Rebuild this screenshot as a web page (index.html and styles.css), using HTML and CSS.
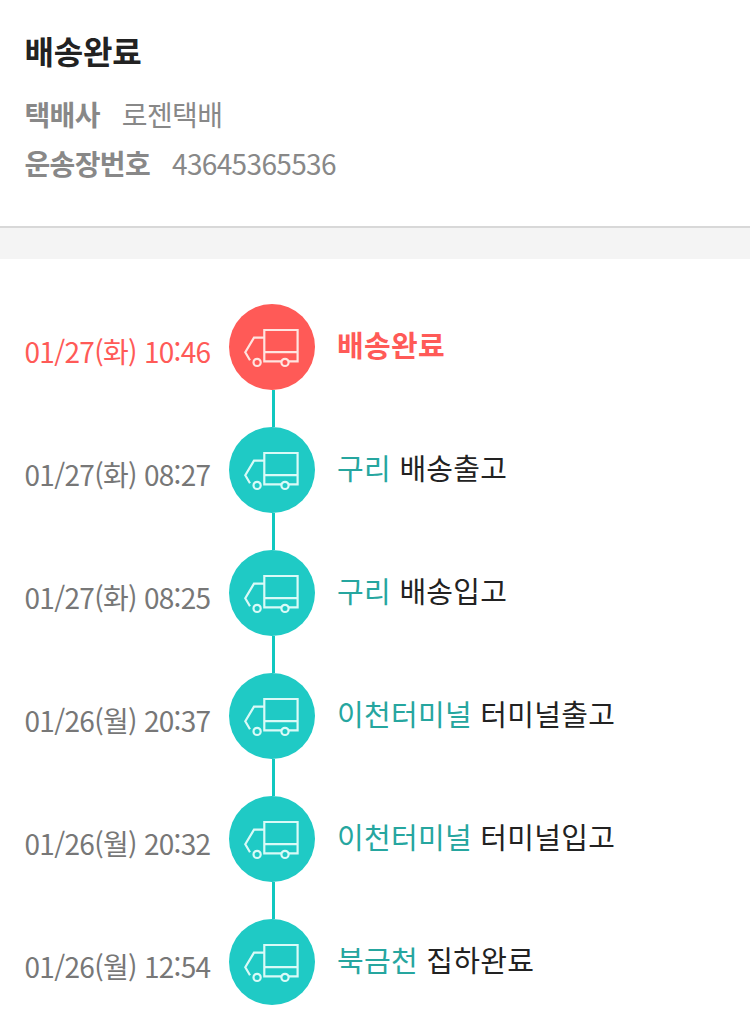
FILE: index.html
```
<!DOCTYPE html>
<html lang="ko">
<head>
<meta charset="utf-8">
<meta name="viewport" content="width=device-width, initial-scale=1.0">
<title>배송조회</title>
<link rel="stylesheet" href="styles.css">
</head>
<body>
<svg width="0" height="0" class="defs">
	<symbol id="truck" viewBox="0 0 86 86">
		<path d="M35.3 26H68.6V57.3H35.3ZM35.3 48.2H68.6M35.3 33.7H25L16.3 48.3L21 56.3" />
		<circle class="wheel" cx="28.1" cy="58.4" r="3.6" />
		<circle class="wheel" cx="56" cy="58.4" r="3.6" />
	</symbol>
</svg>

<div class="summary">
	<h1>배송완료</h1>
	<dl><dt>택배사</dt><dd>로젠택배</dd></dl>
	<dl><dt>운송장번호</dt><dd>43645365536</dd></dl>
</div>

<ul class="steps">
	<li class="done">
		<span class="time">01/27(화) 10:46</span>
		<span class="mark"><svg class="ico"><use href="#truck" /></svg></span>
		<span class="state">배송완료</span>
	</li>
	<li>
		<span class="time">01/27(화) 08:27</span>
		<span class="mark"><svg class="ico"><use href="#truck" /></svg></span>
		<span class="state"><em>구리</em> 배송출고</span>
	</li>
	<li>
		<span class="time">01/27(화) 08:25</span>
		<span class="mark"><svg class="ico"><use href="#truck" /></svg></span>
		<span class="state"><em>구리</em> 배송입고</span>
	</li>
	<li>
		<span class="time">01/26(월) 20:37</span>
		<span class="mark"><svg class="ico"><use href="#truck" /></svg></span>
		<span class="state"><em>이천터미널</em> 터미널출고</span>
	</li>
	<li>
		<span class="time">01/26(월) 20:32</span>
		<span class="mark"><svg class="ico"><use href="#truck" /></svg></span>
		<span class="state"><em>이천터미널</em> 터미널입고</span>
	</li>
	<li>
		<span class="time">01/26(월) 12:54</span>
		<span class="mark"><svg class="ico"><use href="#truck" /></svg></span>
		<span class="state"><em>북금천</em> 집하완료</span>
	</li>
</ul>
</body>
</html>
```
FILE: styles.css
```
* {box-sizing:border-box;margin:0;padding:0;}
body {background:#fff;color:#222;font-family:"Noto Sans CJK KR","Noto Sans KR",sans-serif;font-size:28px;overflow:hidden;}
.defs {display:block;}

.summary {height:228px;padding:26px 24.5px 0;border-bottom:2px solid #d8d8d8;}
.summary h1 {font-size:32px;line-height:48px;font-weight:700;letter-spacing:-0.2px;margin-bottom:16px;}
.summary dl {display:flex;height:49px;line-height:49px;color:#888;letter-spacing:-0.65px;}
.summary dt {font-weight:700;margin-right:22px;}

.steps {list-style:none;border-top:31px solid #f4f4f4;padding-top:45px;}
.steps li {--c:#1fcac5;display:flex;height:123.1px;}
.time {width:229px;flex:none;padding:26px 0 0 24.5px;line-height:42px;color:#777;letter-spacing:-0.7px;white-space:nowrap;}
.mark {width:86px;flex:none;display:flex;flex-direction:column;align-items:center;}
.ico {display:block;width:86px;height:86px;flex:none;border-radius:50%;background:var(--c);fill:none;stroke:#d9faf7;stroke-width:2.2;}
.wheel {fill:var(--c);}
.mark::after {content:"";width:3px;flex:1;margin-left:3px;background:#10c8c0;}
li:last-child .mark::after {display:none;}
.state {padding:19px 0 0 22px;font-size:29px;line-height:42px;letter-spacing:0.3px;white-space:nowrap;}
.state em {font-style:normal;color:#26a69f;}

.steps .done {--c:#ff5a57;}
.done .time,.done .state {color:#ff5a57;}
.done .state {font-weight:700;}
.done .ico {stroke:#ffe4e0;}
```
